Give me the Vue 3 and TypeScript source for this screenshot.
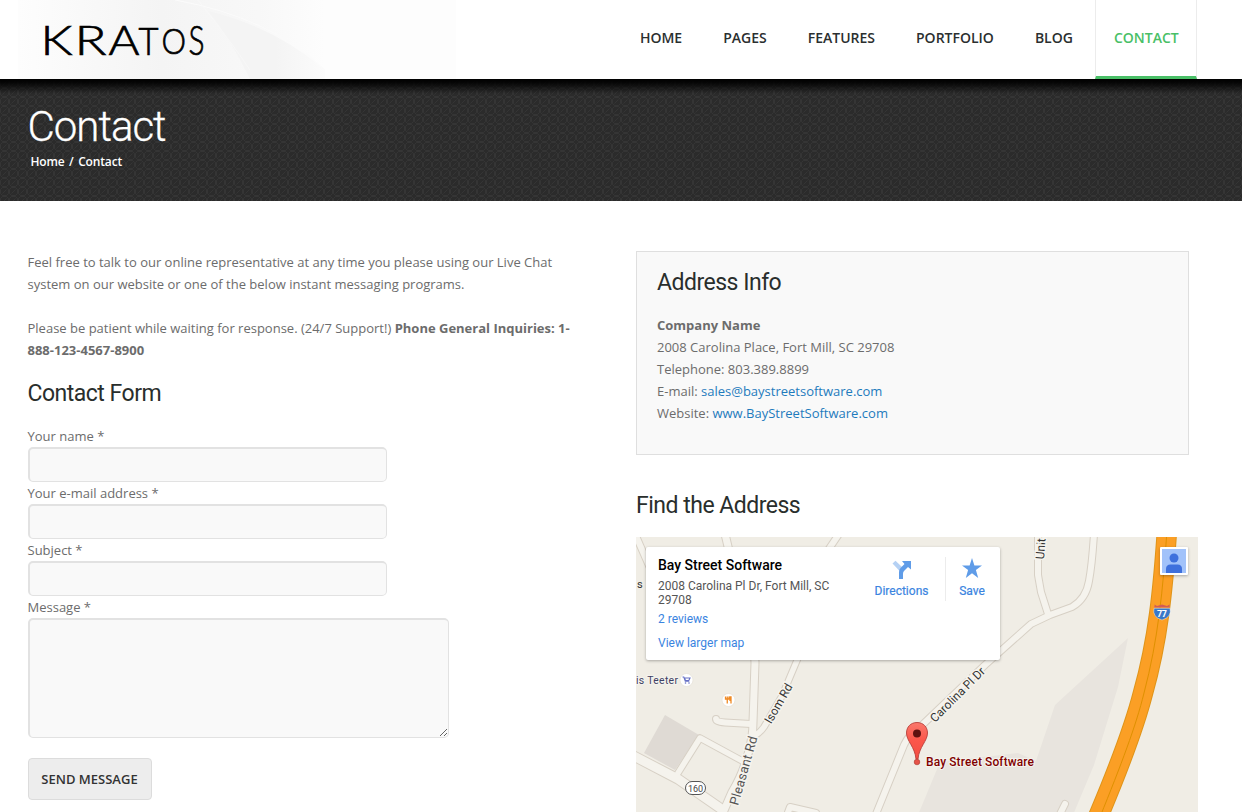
<script setup lang="ts">
interface NavItem { label: string; active?: boolean }
interface Field { id: string; label: string; multiline?: boolean }
interface Glyph { ch: string; x: number; y: number; w: number; size: number }

const nav: NavItem[] = [
  { label: 'HOME' },
  { label: 'PAGES' },
  { label: 'FEATURES' },
  { label: 'PORTFOLIO' },
  { label: 'BLOG' },
  { label: 'CONTACT', active: true },
]

const fields: Field[] = [
  { id: 'name', label: 'Your name' },
  { id: 'email', label: 'Your e-mail address' },
  { id: 'subject', label: 'Subject' },
  { id: 'message', label: 'Message', multiline: true },
]

const logo: Glyph[] = [
  { ch: 'K', x: 40.5, y: 54.5, w: 32, size: 41 },
  { ch: 'R', x: 74.5, y: 55, w: 32, size: 41 },
  { ch: 'A', x: 108.5, y: 54.5, w: 31, size: 41 },
  { ch: 'T', x: 138.5, y: 55, w: 20, size: 37 },
  { ch: 'O', x: 161.5, y: 53.5, w: 24.5, size: 35 },
  { ch: 'S', x: 188.5, y: 55, w: 16, size: 41 },
]

const roads: { d: string; w: number }[] = [
  { d: 'M636 536L650 568', w: 6 },
  { d: 'M725 534L736 580L754 640L755 663L753 722Q753 738 748 754Q743 774 732 792L722 815', w: 7 },
  { d: 'M839 534L818 565', w: 6 },
  { d: 'M798 658L782 696L764 727Q760 733 754 736', w: 5.5 },
  { d: 'M751 724L725 722.500Q716 722 716 719', w: 6 },
  { d: 'M678 773L700 738L746 763', w: 5.5 },
  { d: 'M630 754L678 779L720 808', w: 9 },
  { d: 'M787 815L790 807L816 813', w: 6 },
  { d: 'M876 814L904 745Q909 734 918 729L985 665L1031 624L1050 615L1072 607Q1086 599 1089 581Q1092 565 1094 534', w: 6 },
  { d: 'M1038 534L1038 575L1041 592L1048 614', w: 6 },
  { d: 'M1060 814L1065 804', w: 6 },
]
</script>

<template>
  <div class="page">
    <header class="header">
      <svg class="brand" width="457" height="79" viewBox="0 0 457 79" role="img" aria-label="Kratos">
        <defs>
          <linearGradient id="sheen" x1="18" x2="456" y1="0" y2="0" gradientUnits="userSpaceOnUse">
            <stop offset="0" stop-color="#fdfdfd" />
            <stop offset=".18" stop-color="#f8f8f8" />
            <stop offset=".33" stop-color="#f4f4f4" />
            <stop offset=".55" stop-color="#f8f8f8" />
            <stop offset=".7" stop-color="#fdfdfd" />
            <stop offset="1" stop-color="#fdfdfd" />
          </linearGradient>
          <linearGradient id="curve" x1="200" x2="325" y1="0" y2="0" gradientUnits="userSpaceOnUse">
            <stop offset="0" stop-color="#f4f4f4" />
            <stop offset=".6" stop-color="#f4f4f4" />
            <stop offset="1" stop-color="#fbfbfb" />
          </linearGradient>
        </defs>
        <rect x="18" width="438" height="79" fill="url(#sheen)" />
        <path d="M208 11Q275 27 325 70L325 79H250Q230 38 208 11Z" fill="url(#curve)" />
        <path d="M175 0Q270 17 325 70" fill="none" stroke="#fbfbfb" />
        <path d="M198 0Q230 40 250 70" fill="none" stroke="#f8f8f8" />
        <text
          v-for="g in logo" :key="g.ch" :x="g.x" :y="g.y" :font-size="g.size"
          :textLength="g.w" lengthAdjust="spacingAndGlyphs" class="brand-letter"
        >{{ g.ch }}</text>
      </svg>
      <nav class="nav">
        <a v-for="item in nav" :key="item.label" class="nav-item" :class="{ active: item.active }">{{ item.label }}</a>
      </nav>
    </header>

    <section class="banner">
      <svg class="banner-pattern" width="100%" height="100%" aria-hidden="true">
        <defs>
          <pattern id="weave" width="9" height="9" patternUnits="userSpaceOnUse">
            <rect width="9" height="9" fill="#2b2b2b" />
            <path d="M2.500 .5h4l2 2v4l-2 2h-4l-2-2v-4zM2.500 6.500l4-4" fill="none" stroke="#373737" stroke-width=".8" />
          </pattern>
          <linearGradient id="shade" x1="0" x2="0" y1="0" y2="1">
            <stop offset="0" stop-color="#000" />
            <stop offset=".25" stop-color="#000" stop-opacity=".85" />
            <stop offset="1" stop-color="#000" stop-opacity="0" />
          </linearGradient>
        </defs>
        <rect width="100%" height="100%" fill="url(#weave)" />
        <rect width="100%" height="15" fill="url(#shade)" />
      </svg>
      <h1 class="title">Contact</h1>
      <div class="crumbs"><span>Home</span><span>/</span><span>Contact</span></div>
    </section>

    <main class="content">
      <section class="left">
        <p class="copy">Feel free to talk to our online representative at any time you please using our Live Chat<br>system on our website or one of the below instant messaging programs.</p>
        <p class="copy">Please be patient while waiting for response. (24/7 Support!) <strong>Phone General Inquiries: 1-<br>888-123-4567-8900</strong></p>
        <h2 class="heading form-heading">Contact Form</h2>
        <form class="form" @submit.prevent>
          <template v-for="f in fields" :key="f.id">
            <label class="label" :for="f.id">{{ f.label }} *</label>
            <textarea v-if="f.multiline" :id="f.id" class="control area"></textarea>
            <input v-else :id="f.id" type="text" class="control">
          </template>
          <button type="submit" class="send">SEND MESSAGE</button>
        </form>
      </section>

      <section class="right">
        <div class="info">
          <h2 class="heading">Address Info</h2>
          <div class="lines">
            <strong>Company Name</strong>
            <span>2008 Carolina Place, Fort Mill, SC 29708</span>
            <span>Telephone: 803.389.8899</span>
            <span>E-mail: <a>sales@baystreetsoftware.com</a></span>
            <span>Website: <a>www.BayStreetSoftware.com</a></span>
          </div>
        </div>
        <h2 class="heading find">Find the Address</h2>
        <div class="map">
          <svg class="map-canvas" width="562" height="275" viewBox="636 537 562 275">
            <rect x="636" y="537" width="562" height="275" fill="#f0ede5" />
            <path d="M665 715L699 735L675 770L644 753Z" fill="#dfdad4" />
            <path d="M1128 638L1055 705L1036 761L1018 753L940 762L918 815H1073L1094 765L1118 687Z" fill="#e8e4de" />
            <g fill="none" stroke-linecap="round" stroke-linejoin="round">
              <path v-for="r in roads" :key="'c' + r.d" :d="r.d" :stroke-width="r.w + 2" stroke="#d7d0c5" />
              <path v-for="r in roads" :key="'f' + r.d" :d="r.d" :stroke-width="r.w" stroke="#f5f3ed" />
              <path d="M1167 530C1163 590 1158 640 1143 693C1133 732 1117 772 1098 817" stroke="#df9419" stroke-width="20.500" />
              <path d="M1167 530C1163 590 1158 640 1143 693C1133 732 1117 772 1098 817" stroke="#fb9f25" stroke-width="18.500" />
              <path d="M1167 530C1163 590 1158 640 1144 693C1136 726 1121 765 1100 817" stroke="#df9000" />
            </g>
            <g class="road-name">
              <text transform="translate(1044 559.500) rotate(-86)" textLength="21">Unit</text>
              <text transform="translate(771 724.500) rotate(-60)" textLength="44">Isom Rd</text>
              <text transform="translate(935 723) rotate(-45)" textLength="72">Carolina Pl Dr</text>
              <text transform="translate(738 806) rotate(-74)" textLength="71" class="wide-name">Pleasant Rd</text>
            </g>
            <text x="637" y="588" class="poi">s</text>
            <text x="636" y="684" textLength="42" class="poi shop">is Teeter</text>
            <g>
              <circle cx="686.500" cy="680" r="6.500" fill="#fff" stroke="#e2ddd4" stroke-width=".6" />
              <path d="M682.500 677h1.300l1.500 4.300h4M684.500 678h5.500l-1.200 2.500h-3.300z" fill="none" stroke="#6670c5" stroke-width="1.100" />
              <circle cx="685.500" cy="683" r=".8" fill="#6670c5" /><circle cx="689" cy="683" r=".8" fill="#6670c5" />
              <circle cx="728.500" cy="700" r="6.500" fill="#fff" stroke="#e2ddd4" stroke-width=".6" />
              <path d="M725.500 696.500v2.500h3.500v-2.500M727.250 696.500v7M731 703.500v-6.500h-1v4" fill="none" stroke="#f08a24" stroke-width="1.300" />
            </g>
            <rect x="685.500" y="781.500" width="20" height="13" rx="6.500" fill="#fff" stroke="#555" />
            <text x="688" y="791.500" textLength="15" class="route">160</text>
            <path d="M1154 608Q1155 605 1154.500 604.500L1157 606L1162 604.500L1167 606L1169.500 604.500V607.500H1154Z" fill="#d25b56" />
            <path d="M1154 608.300H1170Q1172 617 1162 620Q1152 617 1154 608.300Z" fill="#3978c8" stroke="#fff" stroke-width=".4" />
            <text x="1157" y="616.500" textLength="10" class="shield">77</text>
            <defs>
              <linearGradient id="pin" x1="0" x2="0" y1="0" y2="1">
                <stop offset="0" stop-color="#f9786c" /><stop offset=".5" stop-color="#fb564a" /><stop offset="1" stop-color="#f34d42" />
              </linearGradient>
            </defs>
            <circle cx="917" cy="762" r="2.800" fill="#e65348" stroke="#a8382f" stroke-width=".6" />
            <path d="M917 722.500C910.700 722.500 906.500 727 906.500 733C906.500 741 915 747 916 759H918C919 747 927.500 741 927.500 733C927.500 727 923.300 722.500 917 722.500Z" fill="url(#pin)" stroke="#b8403a" stroke-width=".9" />
            <circle cx="917" cy="733.500" r="4" fill="#5e1210" />
            <text x="926" y="766" textLength="108" class="place">Bay Street Software</text>
          </svg>

          <div class="card">
            <div class="card-main">
              <div class="card-title">Bay Street Software</div>
              <div class="card-address">2008 Carolina Pl Dr, Fort Mill, SC<br>29708</div>
              <a class="card-link reviews">2 reviews</a>
              <a class="card-link">View larger map</a>
            </div>
            <div class="action directions">
              <svg width="20" height="20" viewBox="0 0 20 20">
                <path d="M.5 3.500L3.500.7L10 7L8 11.500Z" fill="#b5d1f4" />
                <path d="M7 19V12Q7 9 9 7.500L12.500 4L10 1H19V9.500L16 7L12 11Q11 12 11 14V19Z" fill="#5f9ce8" />
              </svg>
              <span>Directions</span>
            </div>
            <div class="action save">
              <svg width="20" height="20" viewBox="0 0 20 20">
                <path d="M10 0L12.400 7.400H20L13.900 12L16.200 20L10 15.200L3.800 20L6.100 12L0 7.400H7.600Z" fill="#5f9ce8" />
              </svg>
              <span>Save</span>
            </div>
          </div>

          <div class="avatar">
            <svg width="24" height="24" viewBox="0 0 24 24">
              <rect width="24" height="24" fill="#a1c2fa" />
              <circle cx="12" cy="9" r="4.500" fill="#3e70dd" />
              <path d="M4 24V20Q4 15.500 8.500 15.500H15.500Q20 15.500 20 20V24Z" fill="#3e70dd" />
            </svg>
          </div>
        </div>
      </section>
    </main>
  </div>
</template>

<style>
html, body { margin: 0; background: #fff; overflow: hidden; }
</style>

<style scoped>
* { box-sizing: border-box; }
.page { width: 1242px; height: 812px; overflow: hidden; background: #fff; color: #6c6c6c; font: 13px/22px "Open Sans", sans-serif; }
.header { height: 79px; display: flex; justify-content: space-between; padding-right: 45px; }
.brand { display: block; }
.brand-letter { font-family: Lato, sans-serif; font-weight: 300; fill: #000; stroke: #000; stroke-width: .7px; }
.nav { display: flex; gap: 3px; }
.nav-item { height: 79px; padding: 0 18px; border: solid transparent; border-width: 0 1px 3px; font-size: 14px; font-weight: 600; line-height: 76px; color: #2b2f2f; }
.nav-item.active { padding-right: 17.3px; color: #49bf67; border-color: #ececec; border-bottom-color: #49bf67; }

.banner { position: relative; height: 122px; padding: 23px 0 0 27.5px; color: #fff; overflow: hidden; }
.banner-pattern { position: absolute; inset: 0; display: block; }
.title { position: relative; margin: 0; font: 300 42px/49px Roboto, sans-serif; letter-spacing: -1px; -webkit-text-stroke: .3px #fff; }
.crumbs { position: relative; display: flex; gap: 4.5px; padding-left: 3px; font-size: 12px; font-weight: 600; line-height: 22px; letter-spacing: -.15px; }

.content { display: grid; grid-template-columns: 608.5px 562px; padding: 50px 0 0 27.5px; }
.copy { margin: 0 0 22px; white-space: nowrap; }
.heading { margin: 0; font: 400 23px/28px Roboto, sans-serif; letter-spacing: -.5px; color: #292e2c; }
.form-heading { margin: -3px 0 17px; }
.form { display: flex; flex-direction: column; align-items: flex-start; }
.label { height: 22px; }
.control { display: block; width: 359px; height: 35px; margin: 0 0 0 .5px; padding: 4px; border: 1px solid #e2e2e2; border-top-width: 2px; border-left-width: 2px; border-radius: 5px; background: #f9f9f9; outline: 0; }
.area { width: 421px; height: 120px; resize: both; }
.send { width: 124px; height: 42px; margin: 20px 0 0 .5px; padding: 0 1px 0 0; border: 1px solid #dcdcdc; border-radius: 4px; background: #ededed; color: #333; font: 600 13px/20px "Open Sans", sans-serif; }

.info { width: 553px; height: 204px; padding: 17px 20px; border: 1px solid #dfdfdf; background: #f9f9f9; }
.lines { display: flex; flex-direction: column; margin-top: 17px; }
.lines a { color: #1e7bbd; }
.find { margin: 37px 0 17px; }
.map { position: relative; width: 562px; height: 275px; overflow: hidden; font-family: Roboto, sans-serif; }
.map-canvas { display: block; font-family: Roboto, sans-serif; }
.road-name { font-size: 12px; fill: #333; stroke: #f5f3ed; stroke-width: 3px; paint-order: stroke; }
.wide-name { font-size: 13px; fill: #555; }
.poi { font-size: 11px; fill: #333; }
.shop { font-size: 10.5px; fill: #3e4164; stroke: #f5f3ed; stroke-width: 2px; paint-order: stroke; }
.route { font-size: 9px; fill: #444; }
.shield { font-size: 9px; font-weight: 700; fill: #fff; }
.place { font-size: 12px; font-weight: 500; fill: #7f0000; stroke: #f5f3ed; stroke-width: 2px; paint-order: stroke; }
.card { position: absolute; left: 10px; top: 10px; width: 354px; height: 113px; display: flex; padding: 10px 0 0 12px; border-radius: 2px; background: #fff; box-shadow: 0 1px 3px rgba(0, 0, 0, .3); font-size: 12px; line-height: 14px; }
.card-main { width: 200px; display: flex; flex-direction: column; white-space: nowrap; }
.card-title { font-size: 14px; font-weight: 500; line-height: 17px; color: #000; }
.card-address { margin-top: 5px; color: #555; }
.card-link { color: #3a84df; }
.reviews { margin: 5px 0 10px; }
.action { display: flex; flex-direction: column; align-items: center; gap: 4px; height: 44px; color: #3a84df; -webkit-text-stroke: .2px #3a84df; }
.directions { width: 87px; padding-top: 3px; }
.save { width: 53px; padding-top: 1px; gap: 6px; border-left: 1px solid #ececec; }
.avatar { position: absolute; left: 524px; top: 10px; width: 28px; height: 28px; padding: 2px; border-radius: 1px; background: #fff; box-shadow: 0 1px 3px rgba(0, 0, 0, .3); }
.avatar svg { display: block; }
</style>
